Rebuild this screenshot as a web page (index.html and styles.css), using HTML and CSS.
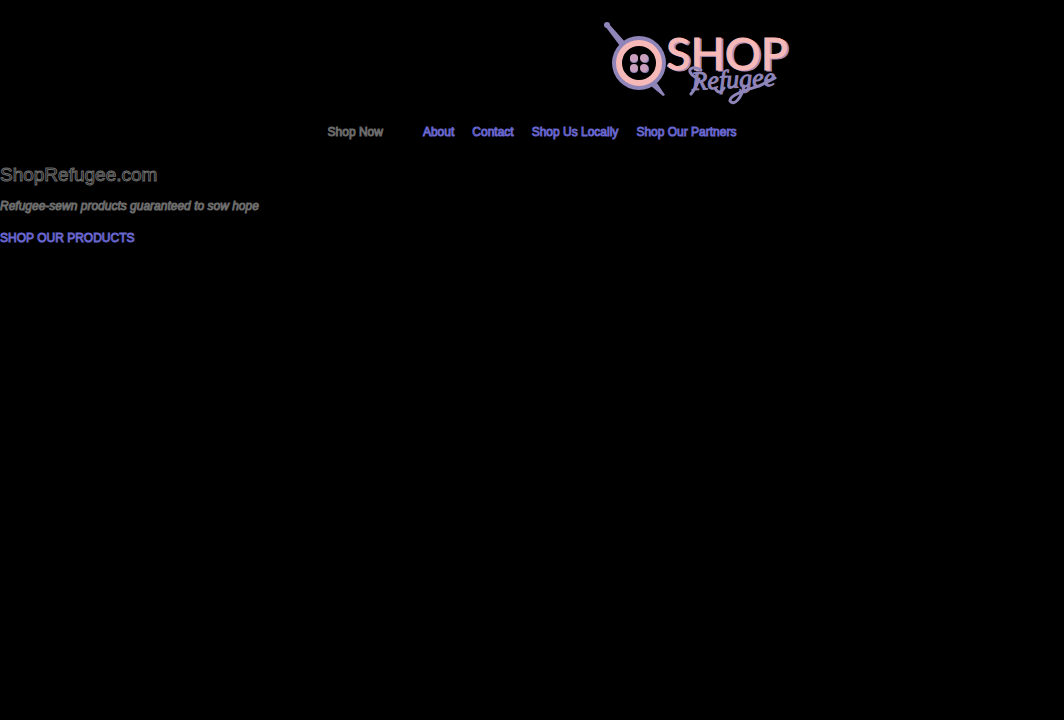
FILE: index.html
```html
<!DOCTYPE html>
<html lang="en">
<head>
<meta charset="utf-8">
<title>ShopRefugee.com</title>
<link rel="stylesheet" href="styles.css">
</head>
<body>
<header class="header">
  <a class="logo" href="#" aria-label="Shop Refugee">
    <svg class="logo-art" width="186" height="88" viewBox="0 0 186 88">
      <g class="needle">
        <circle cx="4" cy="5" r="3"/>
        <path d="M2 6 L6 4 L23 23 L17 26 Z M48 66 L54 63 L62 75 L60 76 Z"/>
      </g>
      <circle class="rim" cx="36" cy="43" r="27"/>
      <circle class="ring" cx="36" cy="43" r="20"/>
      <g class="hole-shade"><circle cx="31" cy="39" r="4"/><circle cx="42" cy="39" r="4"/><circle cx="31" cy="49" r="4"/><circle cx="42" cy="49" r="4"/></g>
      <g class="hole"><circle cx="31" cy="38" r="4"/><circle cx="41" cy="38" r="4"/><circle cx="31" cy="48" r="4"/><circle cx="41" cy="48" r="4"/></g>
      <text class="shop shop-shade" x="65" y="51">SHOP</text>
      <text class="shop" x="63" y="50">SHOP</text>
      <text class="refugee" x="89" y="70" transform="rotate(-3 89 70)">Refugee</text>
      <path class="swash" d="M98 50 C88 44 82 51 92 57 M88 74 Q93 68 96 59 M112 68 Q116 76 121 68 M141 66 C139 77 131 87 127 81 C126 75 143 70 156 66 L172 58"/>
    </svg>
  </a>
  <nav class="nav">
    <button class="nav-item menu" type="button">Shop Now</button>
    <a class="nav-item" href="#">About</a>
    <a class="nav-item" href="#">Contact</a>
    <a class="nav-item" href="#">Shop Us Locally</a>
    <a class="nav-item" href="#">Shop Our Partners</a>
  </nav>
</header>
<main class="main">
  <h1 class="title">ShopRefugee.com</h1>
  <p class="tagline">Refugee-sewn products guaranteed to sow hope</p>
  <a class="products" href="#">SHOP OUR PRODUCTS</a>
</main>
</body>
</html>
```
FILE: styles.css
```css
body {
  margin: 0;
  background: #000;
  color: #000;
  font: 12px/16px "Liberation Sans", Arial, sans-serif;
  -webkit-text-stroke: 1px #6c6c6c;
}
.header { padding-top: 20px; }
.logo { display: block; width: fit-content; margin-left: 56.7%; }
.logo-art { display: block; overflow: visible; }
.needle, .rim, .hole-shade { fill: #8f85b9; }
.ring { fill: #000; stroke: #f6b9b7; stroke-width: 6px; }
.hole { fill: #c99fbd; }
.logo-art, .logo-art .rim, .needle { -webkit-text-stroke: 0; }
.shop {
  font: 45px Lato, sans-serif;
  fill: #f6b9b7;
  stroke: #f6b9b7;
  stroke-width: 1px;
}
.shop-shade { fill: #ad91b9; stroke: #ad91b9; }
.refugee {
  font: italic 26px "Liberation Serif", serif;
  fill: #8f85b9;
  stroke: #8f85b9;
  stroke-width: 1px;
}
.swash { fill: none; stroke: #8f85b9; stroke-width: 3px; stroke-linecap: round; }
.nav {
  display: flex;
  justify-content: center;
  gap: 18px;
  margin-top: 16px;
}
.nav-item, .products {
  color: #000;
  text-decoration: none;
  -webkit-text-stroke: 1px #6866cf;
}
.menu {
  margin: 0 22px 0 0;
  padding: 0;
  border: 0;
  background: none;
  font: inherit;
  -webkit-text-stroke-color: #6c6c6c;
}
.main { padding-top: 24px; }
.title {
  margin: 0;
  font-size: 19px;
  font-weight: 400;
  line-height: 22px;
}
.tagline { margin: 12px 0 16px; font-style: italic; }
.products { display: block; width: fit-content; }
```
